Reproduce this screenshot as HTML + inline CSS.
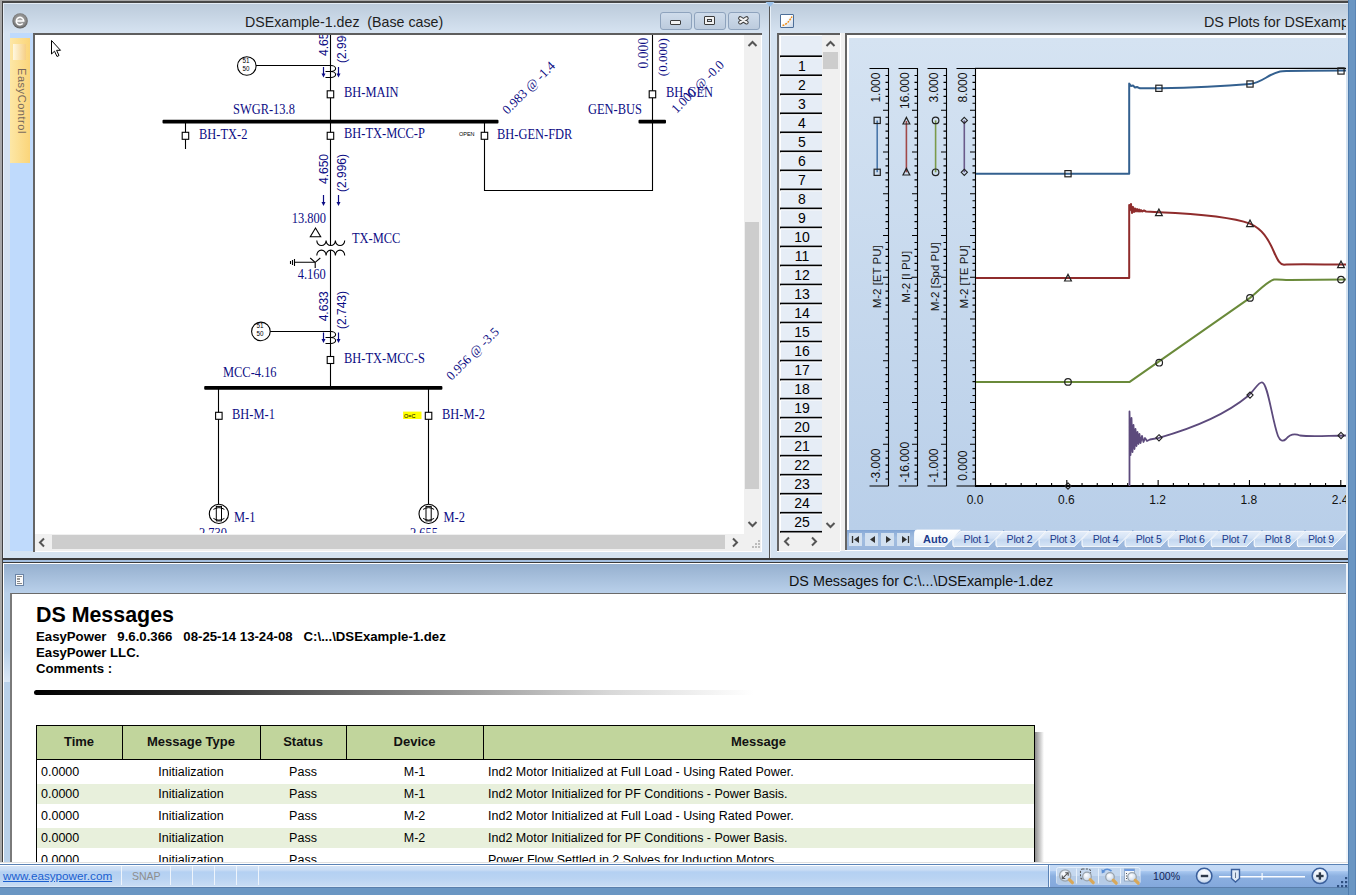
<!DOCTYPE html><html><head><meta charset="utf-8"><style>
*{margin:0;padding:0;box-sizing:border-box}
html,body{width:1356px;height:895px;overflow:hidden}
body{position:relative;background:#6a96c3;font-family:"Liberation Sans",sans-serif}
.a{position:absolute}
.tb{background:linear-gradient(#bccbdb,#d6e3f1)}
.btn{position:absolute;top:12px;height:18px;width:32px;border:1px solid #8ea3bd;border-radius:3px;background:linear-gradient(#cfdceb,#bccbdd)}
.sb{background:#f0f0f0}
.thumb{background:#cdcdcd}
.dg{font-family:"Liberation Serif",serif;color:#10108a;font-size:12.5px;white-space:nowrap;line-height:1}
.dgs{font-family:"Liberation Sans",sans-serif;color:#10108a;font-size:12px;white-space:nowrap;line-height:1}
.row{position:absolute;left:780px;width:42px;height:17px;background:#e6edf6;border-left:1px solid #fff;border-top:1px solid #fff;font-size:14px;text-align:center;line-height:17px;color:#000}
.tab{position:absolute;top:533px;height:16px;font-size:12px;color:#1d3c8c;line-height:16px}
.tr{position:absolute;left:36px;width:998px;height:22px;font-size:12.5px;color:#000;line-height:22px;white-space:nowrap}
.tr span{position:absolute;top:0}
</style></head><body>
<div class="a" style="left:0;top:0;width:1348px;height:1px;background:#a8a8a8"></div>
<div class="a" style="left:0;top:1px;width:1348px;height:2px;background:#474747"></div>
<div class="a" style="left:0;top:0;width:2px;height:862px;background:#a8a8a8"></div>
<div class="a" style="left:2px;top:1px;width:1px;height:862px;background:#404040"></div>
<div class="a" style="left:3px;top:3px;width:766px;height:556px;background:#d5e3f1"></div>
<div class="a tb" style="left:3px;top:3px;width:766px;height:30px;border-top:1px solid #e4ecf5;border-left:1px solid #e4ecf5"></div>
<div class="a" style="left:3px;top:33px;width:1px;height:526px;background:#e8f0fa"></div>
<svg class="a" style="left:12px;top:13px" width="17" height="17"><defs><radialGradient id="eg" cx="0.5" cy="0.45" r="0.55"><stop offset="0" stop-color="#b4b4b4"/><stop offset="0.7" stop-color="#8a8a8a"/><stop offset="1" stop-color="#555"/></radialGradient></defs><circle cx="8.1" cy="7.9" r="7.7" fill="url(#eg)"/><path d="M4.3 7.9 H11.7 A3.7 3.7 0 1 0 10.7 10.6" fill="none" stroke="#fff" stroke-width="1.5"/></svg>
<div class="a" style="left:245.4px;top:12.8px;font-size:15px;transform:scaleX(0.947);transform-origin:0 0;color:#1e1e1e;white-space:pre;line-height:18px">DSExample-1.dez  (Base case)</div>
<div class="btn" style="left:660px"></div>
<div class="btn" style="left:694px"></div>
<div class="btn" style="left:728px"></div>
<div class="a" style="left:670px;top:20px;width:11px;height:5px;border:1px solid #3d3d3d;border-radius:1px;background:#f2f2f2"></div>
<div class="a" style="left:704px;top:16px;width:11px;height:9px;border:1px solid #3d3d3d;border-radius:1px;background:#f2f2f2"></div>
<div class="a" style="left:707px;top:19px;width:5px;height:3px;border:1px solid #3d3d3d;background:#cfdceb"></div>
<svg class="a" style="left:736px;top:14px" width="16" height="12" viewBox="0 0 16 12"><path d="M4.2 4.3 L10.6 8.4 M10.6 4.3 L4.2 8.4" stroke="#3d3d3d" stroke-width="4.2" stroke-linecap="round"/><path d="M4.2 4.3 L10.6 8.4 M10.6 4.3 L4.2 8.4" stroke="#f4f4f4" stroke-width="2.2" stroke-linecap="round"/></svg>
<div class="a" style="left:10px;top:33px;width:23px;height:518px;background:#bfdafc"></div>
<div class="a" style="left:10px;top:38px;width:20px;height:125px;background:linear-gradient(90deg,#fde7a6,#fbd57a)"></div>
<div class="a" style="left:13px;top:44px;width:13px;height:16px;background:linear-gradient(90deg,#fff8e0,#f6cf86)"></div>
<div class="a" style="left:26.5px;top:68px;transform-origin:0 0;transform:rotate(90deg);font-size:11px;letter-spacing:0.55px;color:#76675c;white-space:nowrap;line-height:11px">EasyControl</div>
<div class="a" style="left:33px;top:33px;width:729px;height:519px;background:#fff;border-left:2px solid #656565;border-top:2px solid #5e5e5e"></div>
<div class="a sb" style="left:744px;top:35px;width:17px;height:499px"></div>
<div class="a thumb" style="left:745px;top:222px;width:14px;height:267px"></div>
<svg class="a" style="left:747px;top:40px" width="11" height="8"><path d="M1.5 6 L5.5 2 L9.5 6" stroke="#555" stroke-width="2" fill="none"/></svg>
<svg class="a" style="left:747px;top:520px" width="11" height="8"><path d="M1.5 2 L5.5 6 L9.5 2" stroke="#555" stroke-width="2" fill="none"/></svg>
<div class="a sb" style="left:35px;top:534px;width:726px;height:17px"></div>
<div class="a thumb" style="left:52px;top:535px;width:673px;height:14px"></div>
<svg class="a" style="left:38px;top:537px" width="8" height="11"><path d="M6 1.5 L2 5.5 L6 9.5" stroke="#555" stroke-width="2" fill="none"/></svg>
<svg class="a" style="left:731px;top:537px" width="8" height="11"><path d="M2 1.5 L6 5.5 L2 9.5" stroke="#555" stroke-width="2" fill="none"/></svg>
<div class="a" style="left:758px;top:540px;width:2px;height:2px;background:#bcbcbc"></div>
<div class="a" style="left:755px;top:543px;width:2px;height:2px;background:#bcbcbc"></div>
<div class="a" style="left:758px;top:543px;width:2px;height:2px;background:#bcbcbc"></div>
<div class="a" style="left:752px;top:546px;width:2px;height:2px;background:#bcbcbc"></div>
<div class="a" style="left:755px;top:546px;width:2px;height:2px;background:#bcbcbc"></div>
<div class="a" style="left:758px;top:546px;width:2px;height:2px;background:#bcbcbc"></div>
<div class="a" style="left:769px;top:3px;width:1px;height:556px;background:#555"></div>
<svg class="a" style="left:0;top:0" width="1356" height="895" viewBox="0 0 1356 895"><defs><clipPath id="cv"><rect x="35" y="35" width="709" height="498"/></clipPath></defs><g clip-path="url(#cv)"><path d="M330.5 30 V245.5 M330.5 250 V388" stroke="#000" stroke-width="1.1" fill="none"/><path d="M256 65.5 H330.5" stroke="#000" stroke-width="1.1" fill="none"/><circle cx="246.8" cy="66" r="9.3" fill="#fff" stroke="#000" stroke-width="1.1"/><text x="242.5" y="63" font-family="Liberation Sans" font-size="6.3" fill="#000">51</text><text x="242.5" y="71" font-family="Liberation Sans" font-size="6.3" fill="#000">50</text><path d="M325.5 71.5 H331.0 A4.6 3 0 0 0 331.0 65.5 M325.5 77.5 H331.0 A4.6 3 0 0 0 331.0 71.5" fill="none" stroke="#000" stroke-width="1.1"/><path d="M323.5 67 V74.5" stroke="#0c0c84" stroke-width="1.2"/><path d="M321.5 73.5 L325.5 73.5 L323.5 77.5 Z" fill="#0c0c84"/><path d="M338.5 67 V74.5" stroke="#0c0c84" stroke-width="1.2"/><path d="M336.5 73.5 L340.5 73.5 L338.5 77.5 Z" fill="#0c0c84"/><rect x="327.2" y="90.8" width="6.5" height="7" fill="#fff" stroke="#000" stroke-width="1.1"/><rect x="327.2" y="132.3" width="6.5" height="7" fill="#fff" stroke="#000" stroke-width="1.1"/><rect x="162.5" y="119.8" width="336" height="3.8" rx="1" fill="#000"/><path d="M185.5 122 V149" stroke="#000" stroke-width="1.1" fill="none"/><rect x="182.2" y="132.3" width="6.5" height="7" fill="#fff" stroke="#000" stroke-width="1.1"/><path d="M484.5 122 V190.5 H652.5 V30" stroke="#000" stroke-width="1.1" fill="none"/><rect x="481.2" y="132.3" width="6.5" height="7" fill="#fff" stroke="#000" stroke-width="1.1"/><rect x="638.5" y="119.8" width="27.5" height="3.8" rx="1" fill="#000"/><rect x="649.2" y="90.8" width="6.5" height="7" fill="#fff" stroke="#000" stroke-width="1.1"/><path d="M323.5 195 V203" stroke="#0c0c84" stroke-width="1.2"/><path d="M321.5 202 L325.5 202 L323.5 206 Z" fill="#0c0c84"/><path d="M338.5 195 V203" stroke="#0c0c84" stroke-width="1.2"/><path d="M336.5 202 L340.5 202 L338.5 206 Z" fill="#0c0c84"/><path d="M310.3 236.7 H320.7 L315.5 228 Z" fill="none" stroke="#000" stroke-width="1.1"/><path d="M316.8 240.5 A4.65 5 0 0 0 326.1 240.5 A4.65 5 0 0 0 335.4 240.5 A4.65 5 0 0 0 344.7 240.5" stroke="#000" stroke-width="1.1" fill="none"/><path d="M316.8 255.6 A4.65 5.5 0 0 1 326.1 255.6 A4.65 5.5 0 0 1 335.4 255.6 A4.65 5.5 0 0 1 344.7 255.6" stroke="#000" stroke-width="1.1" fill="none"/><path d="M310.2 258 L315.2 262.3 L320.3 258 M315.2 262.3 V268 M295 262.3 H315.2 M294.5 259 V266 M292.5 260 V265 M290.5 261 V264" stroke="#000" stroke-width="1.1" fill="none"/><path d="M270 331.5 H330.5" stroke="#000" stroke-width="1.1" fill="none"/><circle cx="260.9" cy="331.4" r="9.3" fill="#fff" stroke="#000" stroke-width="1.1"/><text x="256.59999999999997" y="328.4" font-family="Liberation Sans" font-size="6.3" fill="#000">51</text><text x="256.59999999999997" y="336.4" font-family="Liberation Sans" font-size="6.3" fill="#000">50</text><path d="M325.5 337.5 H331.0 A4.6 3 0 0 0 331.0 331.5 M325.5 343.5 H331.0 A4.6 3 0 0 0 331.0 337.5" fill="none" stroke="#000" stroke-width="1.1"/><path d="M323.5 332.5 V340" stroke="#0c0c84" stroke-width="1.2"/><path d="M321.5 339 L325.5 339 L323.5 343 Z" fill="#0c0c84"/><path d="M338.5 332.5 V340" stroke="#0c0c84" stroke-width="1.2"/><path d="M336.5 339 L340.5 339 L338.5 343 Z" fill="#0c0c84"/><rect x="327.2" y="356.5" width="6.5" height="7" fill="#fff" stroke="#000" stroke-width="1.1"/><rect x="204.2" y="386" width="238.2" height="3.8" rx="1" fill="#000"/><path d="M218.5 388 V504.3 M428.5 388 V504.3" stroke="#000" stroke-width="1.1" fill="none"/><rect x="403.1" y="411.6" width="18.4" height="7.4" fill="#ffff00"/><text x="404" y="417.5" font-family="Liberation Sans" font-size="5.5" fill="#000">O=C</text><rect x="215.6" y="412.3" width="6.5" height="7" fill="#fff" stroke="#000" stroke-width="1.1"/><rect x="425.3" y="412.3" width="6.5" height="7" fill="#fff" stroke="#000" stroke-width="1.1"/><circle cx="218.9" cy="513.9" r="9.6" fill="#fff" stroke="#000" stroke-width="1.1"/><rect x="216.3" y="506.4" width="5.2" height="14.5" fill="none" stroke="#000" stroke-width="1"/><path d="M213.4 509.4 Q218.9 505.9 224.4 509.4 M213.4 518.4 Q218.9 521.9 224.4 518.4" fill="none" stroke="#000" stroke-width="1"/><circle cx="428.6" cy="513.9" r="9.6" fill="#fff" stroke="#000" stroke-width="1.1"/><rect x="426.0" y="506.4" width="5.2" height="14.5" fill="none" stroke="#000" stroke-width="1"/><path d="M423.1 509.4 Q428.6 505.9 434.1 509.4 M423.1 518.4 Q428.6 521.9 434.1 518.4" fill="none" stroke="#000" stroke-width="1"/><text transform="translate(233 114.3) scale(1 1.1)" font-family="Liberation Serif" font-size="12.45" fill="#0c0c84">SWGR-13.8</text><text transform="translate(344 96.5) scale(1 1.1)" font-family="Liberation Serif" font-size="12.45" fill="#0c0c84">BH-MAIN</text><text transform="translate(199 139) scale(1 1.1)" font-family="Liberation Serif" font-size="12.45" fill="#0c0c84">BH-TX-2</text><text transform="translate(344 137.8) scale(1 1.1)" font-family="Liberation Serif" font-size="12.45" fill="#0c0c84">BH-TX-MCC-P</text><text transform="translate(497 138.5) scale(1 1.1)" font-family="Liberation Serif" font-size="12.45" fill="#0c0c84">BH-GEN-FDR</text><text transform="translate(588 114) scale(1 1.1)" font-family="Liberation Serif" font-size="12.45" fill="#0c0c84">GEN-BUS</text><text transform="translate(666 96.5) scale(1 1.1)" font-family="Liberation Serif" font-size="12.45" fill="#0c0c84">BH-GEN</text><text transform="translate(291.8 223.3) scale(1 1.1)" font-family="Liberation Serif" font-size="12.45" fill="#0c0c84">13.800</text><text transform="translate(352 243) scale(1 1.1)" font-family="Liberation Serif" font-size="12.45" fill="#0c0c84">TX-MCC</text><text transform="translate(297.7 279) scale(1 1.1)" font-family="Liberation Serif" font-size="12.45" fill="#0c0c84">4.160</text><text transform="translate(344 363) scale(1 1.1)" font-family="Liberation Serif" font-size="12.45" fill="#0c0c84">BH-TX-MCC-S</text><text transform="translate(223 376.8) scale(1 1.1)" font-family="Liberation Serif" font-size="12.45" fill="#0c0c84">MCC-4.16</text><text transform="translate(232 419) scale(1 1.1)" font-family="Liberation Serif" font-size="12.45" fill="#0c0c84">BH-M-1</text><text transform="translate(442 418.6) scale(1 1.1)" font-family="Liberation Serif" font-size="12.45" fill="#0c0c84">BH-M-2</text><text transform="translate(234 521.9) scale(1 1.1)" font-family="Liberation Serif" font-size="12.45" fill="#0c0c84">M-1</text><text transform="translate(443.5 521.9) scale(1 1.1)" font-family="Liberation Serif" font-size="12.45" fill="#0c0c84">M-2</text><text transform="translate(199 538.3) scale(1 1.1)" font-family="Liberation Serif" font-size="12.45" fill="#0c0c84">2.730</text><text transform="translate(410 538.3) scale(1 1.1)" font-family="Liberation Serif" font-size="12.45" fill="#0c0c84">2.655</text><text x="459" y="135.5" font-family="Liberation Sans" font-size="5.5" fill="#000">OPEN</text><text transform="translate(507.5 115) rotate(-45)" font-family="Liberation Serif" font-size="13" fill="#0c0c84">0.983 @ -1.4</text><text transform="translate(676.5 114) rotate(-45)" font-family="Liberation Serif" font-size="13" fill="#0c0c84">1.000 @ -0.0</text><text transform="translate(451.5 381) rotate(-45)" font-family="Liberation Serif" font-size="13" fill="#0c0c84">0.956 @ -3.5</text><text transform="translate(648.4 68.4) rotate(-90)" font-family="Liberation Serif" font-size="13.6" fill="#0c0c84">0.000</text><text transform="translate(667 76.2) rotate(-90)" font-family="Liberation Serif" font-size="13" fill="#0c0c84">(0.000)</text><text transform="translate(327.8 56) rotate(-90)" font-family="Liberation Sans" font-size="12" fill="#0c0c84">4.650</text><text transform="translate(345.5 63) rotate(-90)" font-family="Liberation Sans" font-size="12" fill="#0c0c84">(2.996)</text><text transform="translate(327.8 184) rotate(-90)" font-family="Liberation Sans" font-size="12" fill="#0c0c84">4.650</text><text transform="translate(345.5 192) rotate(-90)" font-family="Liberation Sans" font-size="12" fill="#0c0c84">(2.996)</text><text transform="translate(328.3 321.3) rotate(-90)" font-family="Liberation Sans" font-size="12" fill="#0c0c84">4.633</text><text transform="translate(345.8 329) rotate(-90)" font-family="Liberation Sans" font-size="12" fill="#0c0c84">(2.743)</text></g><path d="M51.5 40.5 L51.5 54 L54.5 51.2 L57 56.5 L59 55.5 L56.6 50.3 L60.5 50.3 Z" fill="#fff" stroke="#000" stroke-width="1"/></svg>
<div class="a" style="left:770px;top:3px;width:578px;height:556px;background:#d5e3f1"></div>
<div class="a tb" style="left:770px;top:3px;width:578px;height:30px;border-top:1px solid #e4ecf5;border-left:1px solid #e8f0f8"></div>
<div class="a" style="left:770px;top:33px;width:1px;height:526px;background:#e8f0fa"></div>
<svg class="a" style="left:765px;top:2px" width="10" height="6"><path d="M0.5 0 H9.5 L5 5 Z" fill="#9cc2ea"/></svg>
<div class="a" style="left:780px;top:14px;width:14px;height:14px;border:1px solid #4d6f99;border-radius:1px;background:linear-gradient(135deg,#fff 40%,#c9d6e6)"></div>
<svg class="a" style="left:780px;top:14px" width="14" height="14"><path d="M2.5 11.5 Q8 10 12 2.5" stroke="#f08a10" stroke-width="1.4" fill="none" stroke-dasharray="2 1"/></svg>
<div class="a" style="left:770px;top:3px;width:576px;height:30px;overflow:hidden"><div class="a" style="left:434.2px;top:9.8px;font-size:15px;transform:scaleX(0.955);transform-origin:0 0;color:#1e1e1e;white-space:pre;line-height:18px">DS Plots for DSExample-1.dez</div></div>
<div class="a" style="left:777px;top:33px;width:63px;height:518px;background:#f0f0f0;border-left:2px solid #656565;border-top:2px solid #5e5e5e"></div>
<svg class="a" style="left:0;top:0" width="1356" height="895" viewBox="0 0 1356 895"><rect x="780" y="35" width="42" height="498" fill="#e6edf6"/><rect x="780" y="35" width="1" height="498" fill="#fff"/><rect x="780" y="35" width="42" height="1" fill="#fff"/><rect x="780" y="55.40" width="42" height="1.8" fill="#000"/><rect x="781" y="57.20" width="41" height="1" fill="#fff"/><rect x="780" y="74.42" width="42" height="1.8" fill="#000"/><rect x="781" y="76.22" width="41" height="1" fill="#fff"/><rect x="780" y="93.44" width="42" height="1.8" fill="#000"/><rect x="781" y="95.24" width="41" height="1" fill="#fff"/><rect x="780" y="112.46" width="42" height="1.8" fill="#000"/><rect x="781" y="114.26" width="41" height="1" fill="#fff"/><rect x="780" y="131.48" width="42" height="1.8" fill="#000"/><rect x="781" y="133.28" width="41" height="1" fill="#fff"/><rect x="780" y="150.50" width="42" height="1.8" fill="#000"/><rect x="781" y="152.30" width="41" height="1" fill="#fff"/><rect x="780" y="169.52" width="42" height="1.8" fill="#000"/><rect x="781" y="171.32" width="41" height="1" fill="#fff"/><rect x="780" y="188.54" width="42" height="1.8" fill="#000"/><rect x="781" y="190.34" width="41" height="1" fill="#fff"/><rect x="780" y="207.56" width="42" height="1.8" fill="#000"/><rect x="781" y="209.36" width="41" height="1" fill="#fff"/><rect x="780" y="226.58" width="42" height="1.8" fill="#000"/><rect x="781" y="228.38" width="41" height="1" fill="#fff"/><rect x="780" y="245.60" width="42" height="1.8" fill="#000"/><rect x="781" y="247.40" width="41" height="1" fill="#fff"/><rect x="780" y="264.62" width="42" height="1.8" fill="#000"/><rect x="781" y="266.42" width="41" height="1" fill="#fff"/><rect x="780" y="283.64" width="42" height="1.8" fill="#000"/><rect x="781" y="285.44" width="41" height="1" fill="#fff"/><rect x="780" y="302.66" width="42" height="1.8" fill="#000"/><rect x="781" y="304.46" width="41" height="1" fill="#fff"/><rect x="780" y="321.68" width="42" height="1.8" fill="#000"/><rect x="781" y="323.48" width="41" height="1" fill="#fff"/><rect x="780" y="340.70" width="42" height="1.8" fill="#000"/><rect x="781" y="342.50" width="41" height="1" fill="#fff"/><rect x="780" y="359.72" width="42" height="1.8" fill="#000"/><rect x="781" y="361.52" width="41" height="1" fill="#fff"/><rect x="780" y="378.74" width="42" height="1.8" fill="#000"/><rect x="781" y="380.54" width="41" height="1" fill="#fff"/><rect x="780" y="397.76" width="42" height="1.8" fill="#000"/><rect x="781" y="399.56" width="41" height="1" fill="#fff"/><rect x="780" y="416.78" width="42" height="1.8" fill="#000"/><rect x="781" y="418.58" width="41" height="1" fill="#fff"/><rect x="780" y="435.80" width="42" height="1.8" fill="#000"/><rect x="781" y="437.60" width="41" height="1" fill="#fff"/><rect x="780" y="454.82" width="42" height="1.8" fill="#000"/><rect x="781" y="456.62" width="41" height="1" fill="#fff"/><rect x="780" y="473.84" width="42" height="1.8" fill="#000"/><rect x="781" y="475.64" width="41" height="1" fill="#fff"/><rect x="780" y="492.86" width="42" height="1.8" fill="#000"/><rect x="781" y="494.66" width="41" height="1" fill="#fff"/><rect x="780" y="511.88" width="42" height="1.8" fill="#000"/><rect x="781" y="513.68" width="41" height="1" fill="#fff"/><rect x="780" y="530.90" width="42" height="1.8" fill="#000"/><rect x="781" y="532.70" width="41" height="1" fill="#fff"/><text x="802" y="70.82" text-anchor="middle" font-family="Liberation Sans" font-size="14" fill="#000">1</text><text x="802" y="89.84" text-anchor="middle" font-family="Liberation Sans" font-size="14" fill="#000">2</text><text x="802" y="108.86" text-anchor="middle" font-family="Liberation Sans" font-size="14" fill="#000">3</text><text x="802" y="127.88" text-anchor="middle" font-family="Liberation Sans" font-size="14" fill="#000">4</text><text x="802" y="146.90" text-anchor="middle" font-family="Liberation Sans" font-size="14" fill="#000">5</text><text x="802" y="165.92" text-anchor="middle" font-family="Liberation Sans" font-size="14" fill="#000">6</text><text x="802" y="184.94" text-anchor="middle" font-family="Liberation Sans" font-size="14" fill="#000">7</text><text x="802" y="203.96" text-anchor="middle" font-family="Liberation Sans" font-size="14" fill="#000">8</text><text x="802" y="222.98" text-anchor="middle" font-family="Liberation Sans" font-size="14" fill="#000">9</text><text x="802" y="242.00" text-anchor="middle" font-family="Liberation Sans" font-size="14" fill="#000">10</text><text x="802" y="261.02" text-anchor="middle" font-family="Liberation Sans" font-size="14" fill="#000">11</text><text x="802" y="280.04" text-anchor="middle" font-family="Liberation Sans" font-size="14" fill="#000">12</text><text x="802" y="299.06" text-anchor="middle" font-family="Liberation Sans" font-size="14" fill="#000">13</text><text x="802" y="318.08" text-anchor="middle" font-family="Liberation Sans" font-size="14" fill="#000">14</text><text x="802" y="337.10" text-anchor="middle" font-family="Liberation Sans" font-size="14" fill="#000">15</text><text x="802" y="356.12" text-anchor="middle" font-family="Liberation Sans" font-size="14" fill="#000">16</text><text x="802" y="375.14" text-anchor="middle" font-family="Liberation Sans" font-size="14" fill="#000">17</text><text x="802" y="394.16" text-anchor="middle" font-family="Liberation Sans" font-size="14" fill="#000">18</text><text x="802" y="413.18" text-anchor="middle" font-family="Liberation Sans" font-size="14" fill="#000">19</text><text x="802" y="432.20" text-anchor="middle" font-family="Liberation Sans" font-size="14" fill="#000">20</text><text x="802" y="451.22" text-anchor="middle" font-family="Liberation Sans" font-size="14" fill="#000">21</text><text x="802" y="470.24" text-anchor="middle" font-family="Liberation Sans" font-size="14" fill="#000">22</text><text x="802" y="489.26" text-anchor="middle" font-family="Liberation Sans" font-size="14" fill="#000">23</text><text x="802" y="508.28" text-anchor="middle" font-family="Liberation Sans" font-size="14" fill="#000">24</text><text x="802" y="527.30" text-anchor="middle" font-family="Liberation Sans" font-size="14" fill="#000">25</text></svg>
<div class="a" style="left:779px;top:533px;width:43px;height:18px;background:#f0f0f0"></div>
<div class="a thumb" style="left:823px;top:52px;width:15px;height:17px"></div>
<svg class="a" style="left:825px;top:40px" width="11" height="8"><path d="M1.5 6 L5.5 2 L9.5 6" stroke="#555" stroke-width="2" fill="none"/></svg>
<svg class="a" style="left:825px;top:521px" width="11" height="8"><path d="M1.5 2 L5.5 6 L9.5 2" stroke="#555" stroke-width="2" fill="none"/></svg>
<svg class="a" style="left:783px;top:536px" width="8" height="11"><path d="M6 1.5 L2 5.5 L6 9.5" stroke="#555" stroke-width="2" fill="none"/></svg>
<svg class="a" style="left:810px;top:536px" width="8" height="11"><path d="M2 1.5 L6 5.5 L2 9.5" stroke="#555" stroke-width="2" fill="none"/></svg>
<div class="a" style="left:777px;top:551px;width:63px;height:1px;background:#fff"></div>
<div class="a" style="left:840px;top:33px;width:5px;height:518px;background:#f0f0f0;border-left:1.5px solid #fff"></div>
<div class="a" style="left:845px;top:33px;width:501px;height:518px;border-left:2px solid #656565;border-top:2px solid #5e5e5e;background:#fff"></div>
<div class="a" style="left:849px;top:38px;width:497px;height:492px;background:linear-gradient(#d5e3f2,#b9cfe9)"></div>
<div class="a" style="left:847px;top:530px;width:499px;height:20px;background:linear-gradient(#7fa3d3 0px,#8eaed9 2px,#a2bde0 8px,#9ab6dc 20px)"></div>
<div class="a" style="left:849px;top:533px;width:13px;height:13px;background:#d2e0f0"></div>
<div class="a" style="left:865px;top:533px;width:13px;height:13px;background:#d2e0f0"></div>
<div class="a" style="left:881px;top:533px;width:13px;height:13px;background:#d2e0f0"></div>
<div class="a" style="left:897px;top:533px;width:13px;height:13px;background:#d2e0f0"></div>
<svg class="a" style="left:849px;top:533px" width="64" height="13"><path d="M3.5 3 V10" stroke="#333" stroke-width="1.3"/><path d="M10 3 L5 6.5 L10 10 Z" fill="#333"/><path d="M26 3 L21 6.5 L26 10 Z" fill="#333"/><path d="M37 3 L42 6.5 L37 10 Z" fill="#333"/><path d="M53 3 L58 6.5 L53 10 Z" fill="#333"/><path d="M59.5 3 V10" stroke="#333" stroke-width="1.3"/></svg>
<svg class="a" style="left:0;top:0" width="1356" height="895" viewBox="0 0 1356 895"><defs><clipPath id="tbc"><rect x="847" y="526" width="499" height="24"/></clipPath><linearGradient id="tg" x1="0" y1="0" x2="0" y2="1"><stop offset="0" stop-color="#e6eefa"/><stop offset="0.45" stop-color="#d3e2f5"/><stop offset="0.55" stop-color="#c3d7f0"/><stop offset="1" stop-color="#d8e6f6"/></linearGradient><linearGradient id="tw" x1="0" y1="0" x2="0" y2="1"><stop offset="0" stop-color="#ffffff"/><stop offset="0.6" stop-color="#f4f8fd"/><stop offset="1" stop-color="#dfe9f6"/></linearGradient></defs><g clip-path="url(#tbc)"><path d="M1305.6 531 H1347.6 L1332.2 546.9 H1299.3 Q1297.3 546.9 1297.3 545 V539.4 Z" fill="url(#tg)" stroke="#fff" stroke-width="1"/><path d="M1332.2 547.5 H1299.3" stroke="#8fa9cc" stroke-width="0.8"/><path d="M1262.5 531 H1304.5 L1289.1 546.9 H1256.2 Q1254.2 546.9 1254.2 545 V539.4 Z" fill="url(#tg)" stroke="#fff" stroke-width="1"/><path d="M1289.1 547.5 H1256.2" stroke="#8fa9cc" stroke-width="0.8"/><path d="M1219.5 531 H1261.5 L1246.1 546.9 H1213.2 Q1211.2 546.9 1211.2 545 V539.4 Z" fill="url(#tg)" stroke="#fff" stroke-width="1"/><path d="M1246.1 547.5 H1213.2" stroke="#8fa9cc" stroke-width="0.8"/><path d="M1176.5 531 H1218.5 L1203.0 546.9 H1170.2 Q1168.2 546.9 1168.2 545 V539.4 Z" fill="url(#tg)" stroke="#fff" stroke-width="1"/><path d="M1203.0 547.5 H1170.2" stroke="#8fa9cc" stroke-width="0.8"/><path d="M1133.4 531 H1175.4 L1160.0 546.9 H1127.1 Q1125.1 546.9 1125.1 545 V539.4 Z" fill="url(#tg)" stroke="#fff" stroke-width="1"/><path d="M1160.0 547.5 H1127.1" stroke="#8fa9cc" stroke-width="0.8"/><path d="M1090.3 531 H1132.3 L1116.9 546.9 H1084.0 Q1082.0 546.9 1082.0 545 V539.4 Z" fill="url(#tg)" stroke="#fff" stroke-width="1"/><path d="M1116.9 547.5 H1084.0" stroke="#8fa9cc" stroke-width="0.8"/><path d="M1047.3 531 H1089.3 L1073.9 546.9 H1041.0 Q1039.0 546.9 1039.0 545 V539.4 Z" fill="url(#tg)" stroke="#fff" stroke-width="1"/><path d="M1073.9 547.5 H1041.0" stroke="#8fa9cc" stroke-width="0.8"/><path d="M1004.2 531 H1046.2 L1030.8 546.9 H998.0 Q996.0 546.9 996.0 545 V539.4 Z" fill="url(#tg)" stroke="#fff" stroke-width="1"/><path d="M1030.8 547.5 H998.0" stroke="#8fa9cc" stroke-width="0.8"/><path d="M961.2 531 H1003.2 L987.8 546.9 H954.9 Q952.9 546.9 952.9 545 V539.4 Z" fill="url(#tg)" stroke="#fff" stroke-width="1"/><path d="M987.8 547.5 H954.9" stroke="#8fa9cc" stroke-width="0.8"/><path d="M914.7 546.5 V532.5 Q914.7 530.1 917 530.1 H960.4 L944.9 546.5 Z" fill="url(#tw)" stroke="#fff" stroke-width="1"/><text x="923" y="542.8" font-family="Liberation Sans" font-size="11" font-weight="bold" fill="#1d3c8c">Auto</text><text x="976.5" y="542.8" text-anchor="middle" font-family="Liberation Sans" font-size="10.6" letter-spacing="-0.2" fill="#1d3c8c">Plot 1</text><text x="1019.5" y="542.8" text-anchor="middle" font-family="Liberation Sans" font-size="10.6" letter-spacing="-0.2" fill="#1d3c8c">Plot 2</text><text x="1062.6" y="542.8" text-anchor="middle" font-family="Liberation Sans" font-size="10.6" letter-spacing="-0.2" fill="#1d3c8c">Plot 3</text><text x="1105.6" y="542.8" text-anchor="middle" font-family="Liberation Sans" font-size="10.6" letter-spacing="-0.2" fill="#1d3c8c">Plot 4</text><text x="1148.7" y="542.8" text-anchor="middle" font-family="Liberation Sans" font-size="10.6" letter-spacing="-0.2" fill="#1d3c8c">Plot 5</text><text x="1191.8" y="542.8" text-anchor="middle" font-family="Liberation Sans" font-size="10.6" letter-spacing="-0.2" fill="#1d3c8c">Plot 6</text><text x="1234.8" y="542.8" text-anchor="middle" font-family="Liberation Sans" font-size="10.6" letter-spacing="-0.2" fill="#1d3c8c">Plot 7</text><text x="1277.8" y="542.8" text-anchor="middle" font-family="Liberation Sans" font-size="10.6" letter-spacing="-0.2" fill="#1d3c8c">Plot 8</text><text x="1320.9" y="542.8" text-anchor="middle" font-family="Liberation Sans" font-size="10.6" letter-spacing="-0.2" fill="#1d3c8c">Plot 9</text></g></svg>
<div class="a" style="left:845px;top:550px;width:501px;height:1px;background:#fff"></div>
<svg class="a" style="left:0;top:0" width="1356" height="895" viewBox="0 0 1356 895"><defs><clipPath id="pc"><rect x="849" y="37" width="497" height="493"/></clipPath><clipPath id="pa"><rect x="976" y="69" width="370" height="417"/></clipPath></defs><g clip-path="url(#pc)"><rect x="975.5" y="68" width="380" height="418" fill="#fff"/><path d="M888.5 68 V486 M869.5 68.5 H888.5 M869.5 486 H888.5 M883.0 68.50 H888.5 M885.5 75.46 H888.5 M885.5 82.42 H888.5 M885.5 89.38 H888.5 M885.5 96.33 H888.5 M885.5 103.29 H888.5 M883.0 110.25 H888.5 M885.5 117.21 H888.5 M885.5 124.17 H888.5 M885.5 131.12 H888.5 M885.5 138.08 H888.5 M885.5 145.04 H888.5 M883.0 152.00 H888.5 M885.5 158.96 H888.5 M885.5 165.92 H888.5 M885.5 172.88 H888.5 M885.5 179.83 H888.5 M885.5 186.79 H888.5 M883.0 193.75 H888.5 M885.5 200.71 H888.5 M885.5 207.67 H888.5 M885.5 214.62 H888.5 M885.5 221.58 H888.5 M885.5 228.54 H888.5 M883.0 235.50 H888.5 M885.5 242.46 H888.5 M885.5 249.42 H888.5 M885.5 256.38 H888.5 M885.5 263.33 H888.5 M885.5 270.29 H888.5 M883.0 277.25 H888.5 M885.5 284.21 H888.5 M885.5 291.17 H888.5 M885.5 298.12 H888.5 M885.5 305.08 H888.5 M885.5 312.04 H888.5 M883.0 319.00 H888.5 M885.5 325.96 H888.5 M885.5 332.92 H888.5 M885.5 339.88 H888.5 M885.5 346.83 H888.5 M885.5 353.79 H888.5 M883.0 360.75 H888.5 M885.5 367.71 H888.5 M885.5 374.67 H888.5 M885.5 381.62 H888.5 M885.5 388.58 H888.5 M885.5 395.54 H888.5 M883.0 402.50 H888.5 M885.5 409.46 H888.5 M885.5 416.42 H888.5 M885.5 423.38 H888.5 M885.5 430.33 H888.5 M885.5 437.29 H888.5 M883.0 444.25 H888.5 M885.5 451.21 H888.5 M885.5 458.17 H888.5 M885.5 465.12 H888.5 M885.5 472.08 H888.5 M885.5 479.04 H888.5 M883.0 486.00 H888.5 M917.5 68 V486 M898.5 68.5 H917.5 M898.5 486 H917.5 M912.0 68.50 H917.5 M914.5 75.46 H917.5 M914.5 82.42 H917.5 M914.5 89.38 H917.5 M914.5 96.33 H917.5 M914.5 103.29 H917.5 M912.0 110.25 H917.5 M914.5 117.21 H917.5 M914.5 124.17 H917.5 M914.5 131.12 H917.5 M914.5 138.08 H917.5 M914.5 145.04 H917.5 M912.0 152.00 H917.5 M914.5 158.96 H917.5 M914.5 165.92 H917.5 M914.5 172.88 H917.5 M914.5 179.83 H917.5 M914.5 186.79 H917.5 M912.0 193.75 H917.5 M914.5 200.71 H917.5 M914.5 207.67 H917.5 M914.5 214.62 H917.5 M914.5 221.58 H917.5 M914.5 228.54 H917.5 M912.0 235.50 H917.5 M914.5 242.46 H917.5 M914.5 249.42 H917.5 M914.5 256.38 H917.5 M914.5 263.33 H917.5 M914.5 270.29 H917.5 M912.0 277.25 H917.5 M914.5 284.21 H917.5 M914.5 291.17 H917.5 M914.5 298.12 H917.5 M914.5 305.08 H917.5 M914.5 312.04 H917.5 M912.0 319.00 H917.5 M914.5 325.96 H917.5 M914.5 332.92 H917.5 M914.5 339.88 H917.5 M914.5 346.83 H917.5 M914.5 353.79 H917.5 M912.0 360.75 H917.5 M914.5 367.71 H917.5 M914.5 374.67 H917.5 M914.5 381.62 H917.5 M914.5 388.58 H917.5 M914.5 395.54 H917.5 M912.0 402.50 H917.5 M914.5 409.46 H917.5 M914.5 416.42 H917.5 M914.5 423.38 H917.5 M914.5 430.33 H917.5 M914.5 437.29 H917.5 M912.0 444.25 H917.5 M914.5 451.21 H917.5 M914.5 458.17 H917.5 M914.5 465.12 H917.5 M914.5 472.08 H917.5 M914.5 479.04 H917.5 M912.0 486.00 H917.5 M946.5 68 V486 M927.5 68.5 H946.5 M927.5 486 H946.5 M941.0 68.50 H946.5 M943.5 75.46 H946.5 M943.5 82.42 H946.5 M943.5 89.38 H946.5 M943.5 96.33 H946.5 M943.5 103.29 H946.5 M941.0 110.25 H946.5 M943.5 117.21 H946.5 M943.5 124.17 H946.5 M943.5 131.12 H946.5 M943.5 138.08 H946.5 M943.5 145.04 H946.5 M941.0 152.00 H946.5 M943.5 158.96 H946.5 M943.5 165.92 H946.5 M943.5 172.88 H946.5 M943.5 179.83 H946.5 M943.5 186.79 H946.5 M941.0 193.75 H946.5 M943.5 200.71 H946.5 M943.5 207.67 H946.5 M943.5 214.62 H946.5 M943.5 221.58 H946.5 M943.5 228.54 H946.5 M941.0 235.50 H946.5 M943.5 242.46 H946.5 M943.5 249.42 H946.5 M943.5 256.38 H946.5 M943.5 263.33 H946.5 M943.5 270.29 H946.5 M941.0 277.25 H946.5 M943.5 284.21 H946.5 M943.5 291.17 H946.5 M943.5 298.12 H946.5 M943.5 305.08 H946.5 M943.5 312.04 H946.5 M941.0 319.00 H946.5 M943.5 325.96 H946.5 M943.5 332.92 H946.5 M943.5 339.88 H946.5 M943.5 346.83 H946.5 M943.5 353.79 H946.5 M941.0 360.75 H946.5 M943.5 367.71 H946.5 M943.5 374.67 H946.5 M943.5 381.62 H946.5 M943.5 388.58 H946.5 M943.5 395.54 H946.5 M941.0 402.50 H946.5 M943.5 409.46 H946.5 M943.5 416.42 H946.5 M943.5 423.38 H946.5 M943.5 430.33 H946.5 M943.5 437.29 H946.5 M941.0 444.25 H946.5 M943.5 451.21 H946.5 M943.5 458.17 H946.5 M943.5 465.12 H946.5 M943.5 472.08 H946.5 M943.5 479.04 H946.5 M941.0 486.00 H946.5 M975.5 68 V486 M956.5 68.5 H975.5 M956.5 486 H975.5 M970.0 68.50 H975.5 M972.5 75.46 H975.5 M972.5 82.42 H975.5 M972.5 89.38 H975.5 M972.5 96.33 H975.5 M972.5 103.29 H975.5 M970.0 110.25 H975.5 M972.5 117.21 H975.5 M972.5 124.17 H975.5 M972.5 131.12 H975.5 M972.5 138.08 H975.5 M972.5 145.04 H975.5 M970.0 152.00 H975.5 M972.5 158.96 H975.5 M972.5 165.92 H975.5 M972.5 172.88 H975.5 M972.5 179.83 H975.5 M972.5 186.79 H975.5 M970.0 193.75 H975.5 M972.5 200.71 H975.5 M972.5 207.67 H975.5 M972.5 214.62 H975.5 M972.5 221.58 H975.5 M972.5 228.54 H975.5 M970.0 235.50 H975.5 M972.5 242.46 H975.5 M972.5 249.42 H975.5 M972.5 256.38 H975.5 M972.5 263.33 H975.5 M972.5 270.29 H975.5 M970.0 277.25 H975.5 M972.5 284.21 H975.5 M972.5 291.17 H975.5 M972.5 298.12 H975.5 M972.5 305.08 H975.5 M972.5 312.04 H975.5 M970.0 319.00 H975.5 M972.5 325.96 H975.5 M972.5 332.92 H975.5 M972.5 339.88 H975.5 M972.5 346.83 H975.5 M972.5 353.79 H975.5 M970.0 360.75 H975.5 M972.5 367.71 H975.5 M972.5 374.67 H975.5 M972.5 381.62 H975.5 M972.5 388.58 H975.5 M972.5 395.54 H975.5 M970.0 402.50 H975.5 M972.5 409.46 H975.5 M972.5 416.42 H975.5 M972.5 423.38 H975.5 M972.5 430.33 H975.5 M972.5 437.29 H975.5 M970.0 444.25 H975.5 M972.5 451.21 H975.5 M972.5 458.17 H975.5 M972.5 465.12 H975.5 M972.5 472.08 H975.5 M972.5 479.04 H975.5 M970.0 486.00 H975.5" stroke="#000" stroke-width="1.1" fill="none"/><path d="M975 486 H1346 M975.50 486 V480 M990.72 486 V483 M1005.94 486 V483 M1021.16 486 V483 M1036.38 486 V483 M1051.60 486 V483 M1066.82 486 V480 M1082.04 486 V483 M1097.26 486 V483 M1112.48 486 V483 M1127.70 486 V483 M1142.92 486 V483 M1158.14 486 V480 M1173.36 486 V483 M1188.58 486 V483 M1203.80 486 V483 M1219.02 486 V483 M1234.24 486 V483 M1249.46 486 V480 M1264.68 486 V483 M1279.90 486 V483 M1295.12 486 V483 M1310.34 486 V483 M1325.56 486 V483 M1340.78 486 V480" stroke="#000" stroke-width="1.1" fill="none"/><rect x="975" y="485" width="371" height="2" fill="#000"/><rect x="975" y="67.8" width="371" height="1.2" fill="#000"/><text transform="translate(879.7 102.6) rotate(-90)" font-family="Liberation Sans" font-size="12" fill="#111">1.000</text><text transform="translate(879.7 482.5) rotate(-90)" font-family="Liberation Sans" font-size="12" fill="#111">-3.000</text><text transform="translate(908.7 109) rotate(-90)" font-family="Liberation Sans" font-size="12" fill="#111">16.000</text><text transform="translate(908.7 482.5) rotate(-90)" font-family="Liberation Sans" font-size="12" fill="#111">-16.000</text><text transform="translate(937.7 102.6) rotate(-90)" font-family="Liberation Sans" font-size="12" fill="#111">3.000</text><text transform="translate(937.7 482.5) rotate(-90)" font-family="Liberation Sans" font-size="12" fill="#111">-1.000</text><text transform="translate(966.7 102.6) rotate(-90)" font-family="Liberation Sans" font-size="12" fill="#111">8.000</text><text transform="translate(966.7 480.7) rotate(-90)" font-family="Liberation Sans" font-size="12" fill="#111">0.000</text><text transform="translate(880.5 276.8) rotate(-90)" text-anchor="middle" font-family="Liberation Sans" font-size="11.5" fill="#111">M-2 [ET PU]</text><text transform="translate(909.5 276.8) rotate(-90)" text-anchor="middle" font-family="Liberation Sans" font-size="11.5" fill="#111">M-2 [I PU]</text><text transform="translate(938.5 276.8) rotate(-90)" text-anchor="middle" font-family="Liberation Sans" font-size="11.5" fill="#111">M-2 [Spd PU]</text><text transform="translate(967.5 276.8) rotate(-90)" text-anchor="middle" font-family="Liberation Sans" font-size="11.5" fill="#111">M-2 [TE PU]</text><text x="975.0" y="504" text-anchor="middle" font-family="Liberation Sans" font-size="12" fill="#111">0.0</text><text x="1066.3" y="504" text-anchor="middle" font-family="Liberation Sans" font-size="12" fill="#111">0.6</text><text x="1157.6" y="504" text-anchor="middle" font-family="Liberation Sans" font-size="12" fill="#111">1.2</text><text x="1248.9" y="504" text-anchor="middle" font-family="Liberation Sans" font-size="12" fill="#111">1.8</text><text x="1340.2" y="504" text-anchor="middle" font-family="Liberation Sans" font-size="12" fill="#111">2.4</text><path d="M877.2 120.4 V172.3" stroke="#4a77aa" stroke-width="1.6"/><rect x="874.1" y="117.30000000000001" width="6.2" height="6.2" fill="none" stroke="#222" stroke-width="1.2"/><rect x="874.1" y="169.20000000000002" width="6.2" height="6.2" fill="none" stroke="#222" stroke-width="1.2"/><path d="M906.4 121 V172.3" stroke="#a04848" stroke-width="1.6"/><path d="M903.0 124 H909.8 L906.4 117.4 Z" fill="none" stroke="#222" stroke-width="1.2"/><path d="M903.0 175 H909.8 L906.4 168.4 Z" fill="none" stroke="#222" stroke-width="1.2"/><path d="M935.6 120.4 V172.3" stroke="#7b9a4a" stroke-width="1.6"/><circle cx="935.6" cy="120.4" r="3.3" fill="none" stroke="#222" stroke-width="1.2"/><circle cx="935.6" cy="172.3" r="3.3" fill="none" stroke="#222" stroke-width="1.2"/><path d="M964.3 120.4 V172.3" stroke="#6a5a8a" stroke-width="1.6"/><path d="M964.3 117.30000000000001 L967.4 120.4 L964.3 123.5 L961.1999999999999 120.4 Z" fill="none" stroke="#222" stroke-width="1.1"/><path d="M964.3 169.20000000000002 L967.4 172.3 L964.3 175.4 L961.1999999999999 172.3 Z" fill="none" stroke="#222" stroke-width="1.1"/><g clip-path="url(#pa)" fill="none" stroke-width="2" stroke-linejoin="round"><path d="M975 173.7 H1129.2 V83.5 L1131 86 L1133 85.5 L1135 87.5 L1137 87 L1140 88.3 L1158.9 88.3 Q1210 87.5 1250 84 C1262 83 1268 74 1280 71.5 C1286 70.6 1300 70.6 1346 70.6" stroke="#33608f"/><path d="M975 278 H1129.2 V205 L1130 210 L1131 204 L1132 213 L1133 207 L1134 212 L1135 208.5 L1136 211.5 L1137 209 L1138 211.5 L1139 209.5 L1140 211.5 L1141 210 L1142 211.5 L1144 210.5 L1146 211.5 L1158.9 212.2 C1200 214 1235 218 1250 223.6 C1262 229 1268 238 1274 252 C1278 261 1280 264.5 1284 264.7 C1290 264 1296 264.2 1346 264.6" stroke="#8f2c2c"/><path d="M975 381.9 H1129.7 L1250 297.9 C1260 290 1266 282 1274 279.5 C1280 279 1284 280.2 1290 280 L1346 279.5" stroke="#6a8a3a"/><path d="M975 487 H1129.5 V411.5 L1130.5 455 L1131.5 418 L1132.5 452 L1133.5 425 L1134.5 449 L1135.5 429 L1136.5 446 L1137.5 432 L1138.5 444 L1139.5 434 L1140.5 443 L1142 436 L1143.5 442 L1145 438 L1147 441 L1150 439.5 L1159 437.8 C1190 429 1225 415 1248 396 C1255 390 1258 382 1262 382.3 C1268 383 1272 420 1278 436 C1280 441 1283 442 1286 439 C1290 434 1294 433 1300 435.5 C1310 436.8 1320 436 1346 435.5" stroke="#5c4a7c" stroke-width="1.8"/></g><rect x="1064.9" y="170.6" width="6.2" height="6.2" fill="none" stroke="#222" stroke-width="1.2"/><rect x="1155.8000000000002" y="85.2" width="6.2" height="6.2" fill="none" stroke="#222" stroke-width="1.2"/><rect x="1246.9" y="80.9" width="6.2" height="6.2" fill="none" stroke="#222" stroke-width="1.2"/><rect x="1337.9" y="67.9" width="6.2" height="6.2" fill="none" stroke="#222" stroke-width="1.2"/><path d="M1064.6 281 H1071.4 L1068 274.4 Z" fill="none" stroke="#222" stroke-width="1.2"/><path d="M1155.5 215.7 H1162.3000000000002 L1158.9 209.1 Z" fill="none" stroke="#222" stroke-width="1.2"/><path d="M1246.6 226.6 H1253.4 L1250 220.0 Z" fill="none" stroke="#222" stroke-width="1.2"/><path d="M1337.6 267.7 H1344.4 L1341 261.09999999999997 Z" fill="none" stroke="#222" stroke-width="1.2"/><circle cx="1068" cy="381.9" r="3.3" fill="none" stroke="#222" stroke-width="1.2"/><circle cx="1159.2" cy="362.7" r="3.3" fill="none" stroke="#222" stroke-width="1.2"/><circle cx="1250" cy="297.9" r="3.3" fill="none" stroke="#222" stroke-width="1.2"/><circle cx="1341" cy="279.6" r="3.3" fill="none" stroke="#222" stroke-width="1.2"/><path d="M1068 482.9 L1071.1 486 L1068 489.1 L1064.9 486 Z" fill="none" stroke="#222" stroke-width="1.1"/><path d="M1159 434.7 L1162.1 437.8 L1159 440.90000000000003 L1155.9 437.8 Z" fill="none" stroke="#222" stroke-width="1.1"/><path d="M1250 392.0 L1253.1 395.1 L1250 398.20000000000005 L1246.9 395.1 Z" fill="none" stroke="#222" stroke-width="1.1"/><path d="M1341 432.4 L1344.1 435.5 L1341 438.6 L1337.9 435.5 Z" fill="none" stroke="#222" stroke-width="1.1"/></g></svg>
<div class="a" style="left:3px;top:558px;width:1345px;height:2px;background:#3a3a3a"></div>
<div class="a" style="left:3px;top:560px;width:1345px;height:1.5px;background:#a3bedf"></div>
<div class="a" style="left:3px;top:561.5px;width:1345px;height:1px;background:#3a3a3a"></div>
<div class="a" style="left:3px;top:562.5px;width:1345px;height:300px;background:#b9d1ea;border-top:1px solid #fff;border-left:1px solid #fff"></div>
<div class="a" style="left:4px;top:563.5px;width:1344px;height:29px;background:linear-gradient(#96b0cf,#b9d0ea)"></div>
<div class="a" style="left:10px;top:592.5px;width:1336px;height:270px;background:#fff;border-left:2px solid #7a7a7a;border-top:1.5px solid #6a6a6a"></div>
<div class="a" style="left:1346px;top:563px;width:2px;height:299px;background:#eef3f9"></div>
<div class="a" style="left:4px;top:650px;width:6px;height:32px;background:linear-gradient(#b9d1ea,#dbe8f6)"></div>
<div class="a" style="left:15px;top:574px;width:9px;height:12px;background:#fafafa;border:1px solid #6b84a6"></div>
<div class="a" style="left:17px;top:576px;width:5px;height:1px;background:#888"></div>
<div class="a" style="left:17px;top:578px;width:3px;height:2px;background:#999"></div>
<div class="a" style="left:17px;top:581px;width:3px;height:1px;background:#888"></div>
<div class="a" style="left:17px;top:583px;width:5px;height:1px;background:#888"></div>
<div class="a" style="left:788.6px;top:572.4px;font-size:15px;transform:scaleX(0.957);transform-origin:0 0;color:#101010;white-space:pre;line-height:18px">DS Messages for C:\...\DSExample-1.dez</div>
<div class="a" style="left:36px;top:603px;font-size:21.4px;font-weight:bold;color:#000;line-height:24px;white-space:nowrap">DS Messages</div>
<div class="a" style="left:36px;top:629px;font-size:13.2px;font-weight:bold;color:#000;line-height:16px;white-space:pre">EasyPower   9.6.0.366   08-25-14 13-24-08   C:\...\DSExample-1.dez
EasyPower LLC.
Comments :</div>
<div class="a" style="left:34px;top:690px;width:720px;height:4.5px;border-radius:2.5px;background:linear-gradient(90deg,#000 0%,#333 25%,#8a8a8a 55%,#d8d8d8 80%,rgba(255,255,255,0) 100%)"></div>
<div class="a" style="left:36px;top:725px;width:999px;height:140px;border-left:1.5px solid #000;border-right:1.5px solid #000"></div>
<div class="a" style="left:1035px;top:732px;width:9px;height:130px;background:linear-gradient(90deg,#8c8c8c,#d0d0d0 60%,#fff)"></div>
<div class="a" style="left:36px;top:725px;width:999px;height:35px;background:#c1d59c;border:1.5px solid #000"></div>
<div class="a" style="left:122px;top:726px;width:1px;height:33px;background:#000"></div>
<div class="a" style="left:260px;top:726px;width:1px;height:33px;background:#000"></div>
<div class="a" style="left:346px;top:726px;width:1px;height:33px;background:#000"></div>
<div class="a" style="left:483px;top:726px;width:1px;height:33px;background:#000"></div>
<div class="a" style="left:36px;top:733px;width:86px;text-align:center;font-size:13px;font-weight:bold;color:#111;line-height:18px">Time</div>
<div class="a" style="left:122px;top:733px;width:138px;text-align:center;font-size:13px;font-weight:bold;color:#111;line-height:18px">Message Type</div>
<div class="a" style="left:260px;top:733px;width:86px;text-align:center;font-size:13px;font-weight:bold;color:#111;line-height:18px">Status</div>
<div class="a" style="left:346px;top:733px;width:137px;text-align:center;font-size:13px;font-weight:bold;color:#111;line-height:18px">Device</div>
<div class="a" style="left:483px;top:733px;width:551px;text-align:center;font-size:13px;font-weight:bold;color:#111;line-height:18px">Message</div>
<div class="a" style="left:37px;top:762px;width:997px;height:20px;background:#fff"></div>
<div class="a" style="left:41px;top:761px;font-size:12.5px;line-height:22px;white-space:nowrap">0.0000</div>
<div class="a" style="left:122px;top:761px;width:138px;text-align:center;font-size:12.5px;line-height:22px">Initialization</div>
<div class="a" style="left:260px;top:761px;width:86px;text-align:center;font-size:12.5px;line-height:22px">Pass</div>
<div class="a" style="left:346px;top:761px;width:137px;text-align:center;font-size:12.5px;line-height:22px">M-1</div>
<div class="a" style="left:488px;top:761px;font-size:12.5px;line-height:22px;white-space:nowrap">Ind2 Motor Initialized at Full Load - Using Rated Power.</div>
<div class="a" style="left:37px;top:784px;width:997px;height:20px;background:#e8f0dc"></div>
<div class="a" style="left:41px;top:783px;font-size:12.5px;line-height:22px;white-space:nowrap">0.0000</div>
<div class="a" style="left:122px;top:783px;width:138px;text-align:center;font-size:12.5px;line-height:22px">Initialization</div>
<div class="a" style="left:260px;top:783px;width:86px;text-align:center;font-size:12.5px;line-height:22px">Pass</div>
<div class="a" style="left:346px;top:783px;width:137px;text-align:center;font-size:12.5px;line-height:22px">M-1</div>
<div class="a" style="left:488px;top:783px;font-size:12.5px;line-height:22px;white-space:nowrap">Ind2 Motor Initialized for PF Conditions - Power Basis.</div>
<div class="a" style="left:37px;top:806px;width:997px;height:20px;background:#fff"></div>
<div class="a" style="left:41px;top:805px;font-size:12.5px;line-height:22px;white-space:nowrap">0.0000</div>
<div class="a" style="left:122px;top:805px;width:138px;text-align:center;font-size:12.5px;line-height:22px">Initialization</div>
<div class="a" style="left:260px;top:805px;width:86px;text-align:center;font-size:12.5px;line-height:22px">Pass</div>
<div class="a" style="left:346px;top:805px;width:137px;text-align:center;font-size:12.5px;line-height:22px">M-2</div>
<div class="a" style="left:488px;top:805px;font-size:12.5px;line-height:22px;white-space:nowrap">Ind2 Motor Initialized at Full Load - Using Rated Power.</div>
<div class="a" style="left:37px;top:828px;width:997px;height:20px;background:#e8f0dc"></div>
<div class="a" style="left:41px;top:827px;font-size:12.5px;line-height:22px;white-space:nowrap">0.0000</div>
<div class="a" style="left:122px;top:827px;width:138px;text-align:center;font-size:12.5px;line-height:22px">Initialization</div>
<div class="a" style="left:260px;top:827px;width:86px;text-align:center;font-size:12.5px;line-height:22px">Pass</div>
<div class="a" style="left:346px;top:827px;width:137px;text-align:center;font-size:12.5px;line-height:22px">M-2</div>
<div class="a" style="left:488px;top:827px;font-size:12.5px;line-height:22px;white-space:nowrap">Ind2 Motor Initialized for PF Conditions - Power Basis.</div>
<div class="a" style="left:37px;top:850px;width:997px;height:20px;background:#fff"></div>
<div class="a" style="left:41px;top:849px;font-size:12.5px;line-height:22px;white-space:nowrap">0.0000</div>
<div class="a" style="left:122px;top:849px;width:138px;text-align:center;font-size:12.5px;line-height:22px">Initialization</div>
<div class="a" style="left:260px;top:849px;width:86px;text-align:center;font-size:12.5px;line-height:22px">Pass</div>
<div class="a" style="left:346px;top:849px;width:137px;text-align:center;font-size:12.5px;line-height:22px"></div>
<div class="a" style="left:488px;top:849px;font-size:12.5px;line-height:22px;white-space:nowrap">Power Flow Settled in 2 Solves for Induction Motors.</div>
<div class="a" style="left:1348px;top:0;width:1px;height:895px;background:#4f7cad"></div>
<div class="a" style="left:1355px;top:0;width:1px;height:895px;background:#5a85b5"></div>
<div class="a" style="left:0;top:862px;width:1348px;height:1px;background:#e0e0e0"></div>
<div class="a" style="left:0;top:863px;width:1348px;height:25px;background:#fff"></div>
<div class="a" style="left:0;top:864px;width:1348px;height:1px;background:#5a82b5"></div>
<div class="a" style="left:0;top:866px;width:1348px;height:20px;background:linear-gradient(#d3e3f7 0%,#c9dcf4 20%,#b4d0f2 30%,#b9d3f2 60%,#c8dcf4 100%)"></div>
<div class="a" style="left:0;top:886px;width:1348px;height:1px;background:#d6e6f8"></div>
<div class="a" style="left:0;top:887px;width:1348px;height:1px;background:#5a7fac"></div>
<div class="a" style="left:3px;top:867px;font-size:11.7px;color:#1a5fd0;text-decoration:underline;line-height:18px">www.easypower.com</div>
<div class="a" style="left:132px;top:867px;font-size:10.5px;color:#8d8d8d;line-height:18px">SNAP</div>
<div class="a" style="left:121px;top:866px;width:1px;height:19px;background:#9ab6da;border-right:1px solid #eef4fb"></div>
<div class="a" style="left:170px;top:866px;width:1px;height:19px;background:#9ab6da;border-right:1px solid #eef4fb"></div>
<div class="a" style="left:192px;top:866px;width:1px;height:19px;background:#9ab6da;border-right:1px solid #eef4fb"></div>
<div class="a" style="left:214px;top:866px;width:1px;height:19px;background:#9ab6da;border-right:1px solid #eef4fb"></div>
<div class="a" style="left:236px;top:866px;width:1px;height:19px;background:#9ab6da;border-right:1px solid #eef4fb"></div>
<div class="a" style="left:258px;top:866px;width:1px;height:19px;background:#9ab6da;border-right:1px solid #eef4fb"></div>
<div class="a" style="left:1048px;top:866px;width:1px;height:19px;background:#9ab6da;border-right:1px solid #eef4fb"></div>
<div class="a" style="left:1048px;top:865px;width:1px;height:22px;background:#5a82b5"></div>
<div class="a" style="left:1049px;top:865px;width:1px;height:22px;background:#f0f6fd"></div>
<div class="a" style="left:1050px;top:865px;width:298px;height:22px;background:linear-gradient(#c6dbf6 0%,#c2d8f5 25%,#a6c6ef 30%,#8cb0e0 50%,#83a8dc 100%)"></div>
<svg class="a" style="left:1040px;top:860px" width="316" height="35" viewBox="1040 860 316 35"><defs><radialGradient id="mg" cx="0.4" cy="0.35" r="0.7"><stop offset="0" stop-color="#ffffff"/><stop offset="1" stop-color="#c2d3e8"/></radialGradient><radialGradient id="bg2" cx="0.5" cy="0.3" r="0.7"><stop offset="0" stop-color="#ffffff"/><stop offset="0.6" stop-color="#e4edf8"/><stop offset="1" stop-color="#b8cde8"/></radialGradient></defs><rect x="1056.5" y="867.5" width="83.5" height="16.5" rx="2" fill="#c5d8ef" stroke="#e6f0fb" stroke-width="1"/><rect x="1056.5" y="876" width="83.5" height="8" rx="1" fill="#b5cbe6"/><path d="M1076.5 868.5 V883.5" stroke="#e6f0fb" stroke-width="1"/><path d="M1098.5 868.5 V883.5" stroke="#e6f0fb" stroke-width="1"/><path d="M1120.5 868.5 V883.5" stroke="#e6f0fb" stroke-width="1"/><circle cx="1065.2" cy="875.5" r="5.6" fill="url(#mg)" stroke="#9aa4ae" stroke-width="1.3"/><path d="M1069.4 879.7 L1072.4 882.7" stroke="#d8a85a" stroke-width="3.2" stroke-linecap="round"/><path d="M1062.5 878.3 L1068 872.8 M1062.3 875.5 V878.5 H1065.3 M1065.2 872.7 H1068.2 V875.7" stroke="#555" stroke-width="1.1" fill="none"/><rect x="1080.5" y="869" width="10" height="10" rx="2" fill="none" stroke="#555" stroke-width="1.1" stroke-dasharray="2 1.4"/><circle cx="1087" cy="876.5" r="4.3" fill="url(#mg)" stroke="#9aa4ae" stroke-width="1.3"/><path d="M1090.2 879.7 L1093.2 882.7" stroke="#d8a85a" stroke-width="3.2" stroke-linecap="round"/><path d="M1103 871 Q1107 867.5 1111.5 871" stroke="#5b8fd6" stroke-width="1.6" fill="none"/><path d="M1101.5 869 L1101.8 873.5 L1105.5 872 Z" fill="#5b8fd6"/><circle cx="1110" cy="877" r="4.3" fill="url(#mg)" stroke="#9aa4ae" stroke-width="1.3"/><path d="M1113.2 880.2 L1116.2 883.2" stroke="#d8a85a" stroke-width="3.2" stroke-linecap="round"/><rect x="1124.5" y="869" width="10" height="12" fill="#f4f7fb" stroke="#8aa0bc" stroke-width="0.8"/><rect x="1124.5" y="869" width="10" height="2" fill="#6f9be0"/><path d="M1126 873.5 H1127 M1126 876 H1127 M1126 878.5 H1127" stroke="#555" stroke-width="1"/><circle cx="1132" cy="877" r="4.3" fill="url(#mg)" stroke="#9aa4ae" stroke-width="1.3"/><path d="M1135.2 880.2 L1138.2 883.2" stroke="#d8a85a" stroke-width="3.2" stroke-linecap="round"/><circle cx="1204.2" cy="875.9" r="7.7" fill="url(#bg2)" stroke="#3a5f9c" stroke-width="1.5"/><circle cx="1319.9" cy="875.9" r="7.7" fill="url(#bg2)" stroke="#3a5f9c" stroke-width="1.5"/><rect x="1200.8" y="874.8" width="7.4" height="2.4" fill="#2e3a4a"/><rect x="1316.2" y="874.8" width="7.4" height="2.4" fill="#2e3a4a"/><rect x="1318.7" y="872.3" width="2.4" height="7.4" fill="#2e3a4a"/><rect x="1219" y="876" width="86" height="1.5" fill="#fafcff"/><rect x="1261.5" y="873" width="1.2" height="7" fill="#fafcff"/><path d="M1231.5 869.5 H1239.5 V878.5 L1235.5 882 L1231.5 878.5 Z" fill="#dfeaf7" stroke="#3a5f9c" stroke-width="1.4"/><path d="M1235.5 872.5 V878" stroke="#5a6a80" stroke-width="0.9"/><rect x="1345" y="877" width="2.2" height="2.2" fill="#2d4f80"/><rect x="1341" y="881" width="2.2" height="2.2" fill="#2d4f80"/><rect x="1345" y="881" width="2.2" height="2.2" fill="#2d4f80"/><rect x="1337" y="885" width="2.2" height="2.2" fill="#2d4f80"/><rect x="1341" y="885" width="2.2" height="2.2" fill="#2d4f80"/><rect x="1345" y="885" width="2.2" height="2.2" fill="#2d4f80"/></svg>
<div class="a" style="left:1153px;top:868px;font-size:10.6px;color:#15275a;line-height:16px">100%</div>
</body></html>
